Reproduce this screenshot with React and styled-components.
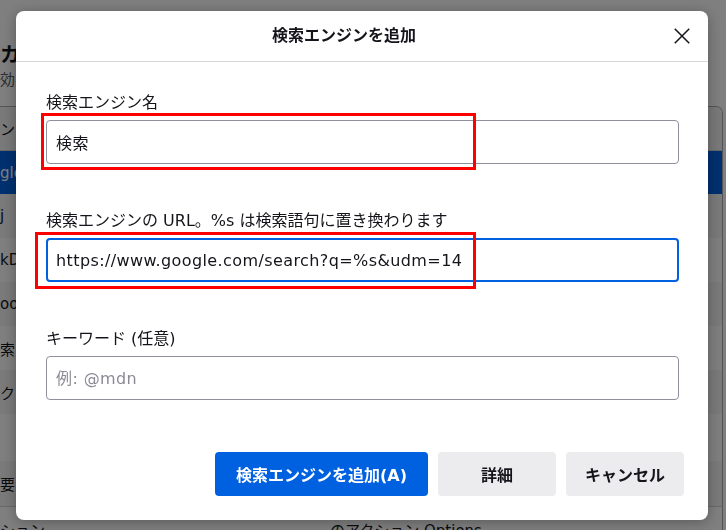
import React from 'react'
import styled, { createGlobalStyle } from 'styled-components'

const GlobalStyle = createGlobalStyle`
  html, body {
    margin: 0;
    padding: 0;
  }
  body {
    width: 726px;
    height: 530px;
    overflow: hidden;
    font-family: 'DejaVu Sans', 'Noto Sans CJK JP', sans-serif;
    color: #15141a;
  }
`

// the settings page that sits behind the modal
const Page = styled.div`
  position: relative;
  width: 726px;
  height: 530px;
  overflow: hidden;
  background: #ffffff;
`

const PageHeading = styled.h1`
  margin: 41px 0 0;
  font-size: 20px;
  line-height: 28px;
  font-weight: 700;
  white-space: nowrap;
`

const PageDesc = styled.p`
  margin: 0;
  font-size: 15px;
  line-height: 22px;
  color: #5b5b66;
  white-space: nowrap;
`

const Table = styled.div`
  margin-top: 15px;
  width: 722px;
  border: 1px solid #a8a8b0;
  border-left: none;
  border-bottom: none;
  border-radius: 0 7px 0 0;
  overflow: hidden;
`

const rowBg = {
  head: '#f2f2f4',
  selected: '#0061e0',
  alt: '#f4f4f6',
  plain: '#ffffff',
}

const Row = styled.div`
  height: ${p => p.$h || 44}px;
  display: flex;
  align-items: center;
  font-size: 15px;
  white-space: nowrap;
  background: ${p => rowBg[p.$tone]};
  color: ${p => (p.$tone === 'selected' ? '#ffffff' : '#15141a')};
  border-bottom: ${p => (p.$line ? '1px solid #d0d0d7' : 'none')};
`

const RowText = styled.span`
  width: ${p => p.$w || 'auto'};
  flex: none;
`

// modal
const Overlay = styled.div`
  position: fixed;
  inset: 0;
  background: rgba(0, 0, 0, 0.5);
`

const Dialog = styled.div`
  position: fixed;
  left: 16px;
  top: 11px;
  width: 692px;
  height: 509px;
  box-sizing: border-box;
  background: #ffffff;
  border-radius: 8px;
  box-shadow: 0 2px 14px rgba(0, 0, 0, 0.3);
  display: flex;
  flex-direction: column;
`

const Header = styled.div`
  flex: none;
  height: 50px;
  display: flex;
  align-items: center;
  padding: 0 8px;
  border-bottom: 1px solid #d8d8dc;
`

const Title = styled.h2`
  flex: 1;
  margin: 0;
  text-align: center;
  font-size: 16px;
  line-height: 22px;
  font-weight: 700;
`

const CloseButton = styled.button`
  width: 36px;
  height: 36px;
  padding: 0;
  border: none;
  border-radius: 4px;
  background: transparent;
  display: flex;
  align-items: center;
  justify-content: center;
  color: #15141a;
`

const Body = styled.div`
  display: flex;
  flex-direction: column;
  padding: 30px 29px 0 30px;
`

const Field = styled.div`
  position: relative;
  display: flex;
  flex-direction: column;
  & + & {
    margin-top: 46px;
  }
`

const Label = styled.label`
  font-size: 16px;
  line-height: 22px;
  margin-bottom: 6px;
  white-space: nowrap;
`

const Input = styled.input`
  height: 44px;
  box-sizing: border-box;
  margin: 0;
  border: ${p => (p.$focused ? '2px solid #0061e0' : '1px solid #8f8f9d')};
  border-radius: 4px;
  padding: 0 ${p => (p.$focused ? 8 : 9)}px;
  font-family: inherit;
  font-size: 16px;
  letter-spacing: 0.4px;
  color: #15141a;
  background: #ffffff;
  outline: none;
  &::placeholder {
    color: #8b8b95;
  }
`

const Highlight = styled.span`
  position: absolute;
  left: ${p => p.$left}px;
  top: ${p => p.$top}px;
  width: ${p => p.$width}px;
  height: 57px;
  box-sizing: border-box;
  border: 3px solid #ff0000;
  pointer-events: none;
`

const Footer = styled.div`
  margin-top: auto;
  display: flex;
  justify-content: flex-end;
  gap: 10px;
  padding: 0 24px 24px 0;
`

const Button = styled.button`
  height: 44px;
  min-width: ${p => (p.$primary ? 213 : 118)}px;
  padding: 0 18px;
  box-sizing: border-box;
  border: none;
  border-radius: 4px;
  font-family: inherit;
  font-size: 16px;
  font-weight: 700;
  background: ${p => (p.$primary ? '#0061e0' : '#ececef')};
  color: ${p => (p.$primary ? '#ffffff' : '#15141a')};
`

const CloseIcon = () => (
  <svg width="16" height="16" viewBox="0 0 16 16" fill="none">
    <path d="M0.75 0.75L15.25 15.25M15.25 0.75L0.75 15.25" stroke="currentColor" strokeWidth="1.5" />
  </svg>
)

const rows = [
  { tone: 'head', text: 'ンジン', h: 43, line: true },
  { tone: 'selected', text: 'gle', h: 43 },
  { tone: 'alt', text: 'j' },
  { tone: 'plain', text: 'kDuck' },
  { tone: 'alt', text: 'oogle' },
  { tone: 'plain', text: '索ホ' },
  { tone: 'alt', text: 'クマーク' },
  { tone: 'plain', text: '', h: 47 },
  { tone: 'alt', text: '要素', h: 45, line: true },
  { tone: 'plain', text: 'ション', extra: 'のアクション Options ...' },
]

export default function App() {
  return (
    <>
      <GlobalStyle />
      <Page>
        <PageHeading>カット</PageHeading>
        <PageDesc>効果</PageDesc>
        <Table>
          {rows.map((r, i) => (
            <Row key={i} $tone={r.tone} $h={r.h} $line={r.line}>
              <RowText $w={r.extra ? '330px' : 'auto'}>{r.text}</RowText>
              {r.extra && <RowText>{r.extra}</RowText>}
            </Row>
          ))}
        </Table>
      </Page>
      <Overlay />
      <Dialog role="dialog" aria-label="検索エンジンを追加">
        <Header>
          <Title>検索エンジンを追加</Title>
          <CloseButton aria-label="閉じる">
            <CloseIcon />
          </CloseButton>
        </Header>
        <Body>
          <Field>
            <Label>検索エンジン名</Label>
            <Input defaultValue="検索" />
            <Highlight $left={-5} $top={21} $width={435} />
          </Field>
          <Field>
            <Label>検索エンジンの URL。%s は検索語句に置き換わります</Label>
            <Input $focused defaultValue="https://www.google.com/search?q=%s&udm=14" />
            <Highlight $left={-11} $top={22} $width={441} />
          </Field>
          <Field>
            <Label>キーワード (任意)</Label>
            <Input placeholder="例: @mdn" />
          </Field>
        </Body>
        <Footer>
          <Button $primary>検索エンジンを追加(A)</Button>
          <Button>詳細</Button>
          <Button>キャンセル</Button>
        </Footer>
      </Dialog>
    </>
  )
}
